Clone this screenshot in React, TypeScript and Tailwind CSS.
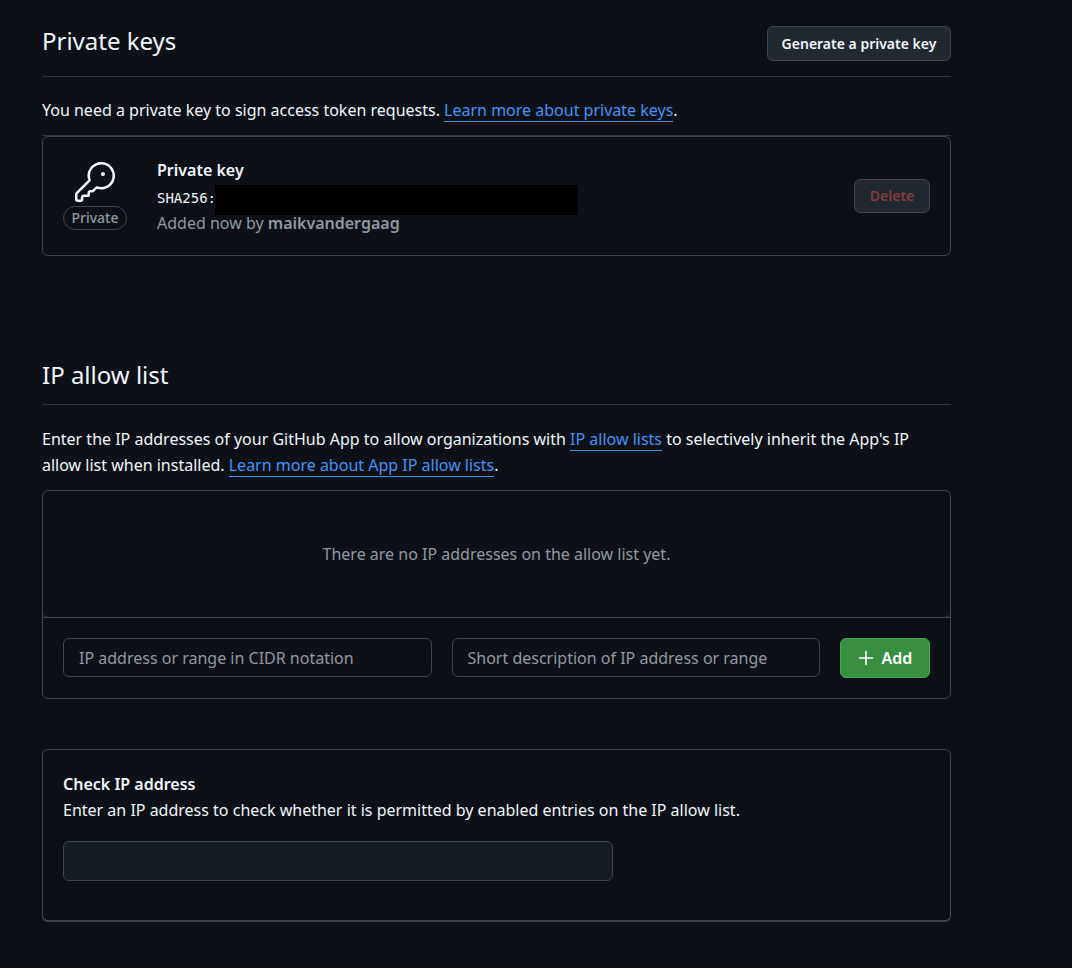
const link = "border-b border-[#4493f8] text-[#4493f8]";
const box = "rounded-md border border-[#3d444d]";

function KeyIcon() {
  return (
    <svg width="40" height="40" viewBox="0 0 24 24" fill="#f0f6fc" aria-hidden="true">
      <path d="M16.75 8.5a1.25 1.25 0 1 0 0-2.5 1.25 1.25 0 0 0 0 2.5Z" />
      <path d="M15.75 0a8.25 8.25 0 1 1-2.541 16.101l-1.636 1.636a1.744 1.744 0 0 1-1.237.513H9.25a.25.25 0 0 0-.25.25v1.448a.876.876 0 0 1-.256.619l-.214.213a.75.75 0 0 1-.545.22H5.25a.25.25 0 0 0-.25.25v1A1.75 1.75 0 0 1 3.25 24h-1.5A1.75 1.75 0 0 1 0 22.25v-2.836c0-.464.185-.908.513-1.236l7.386-7.388A8.249 8.249 0 0 1 15.75 0ZM9 8.25a6.733 6.733 0 0 0 .463 2.462.75.75 0 0 1-.168.804l-7.722 7.721a.25.25 0 0 0-.073.177v2.836c0 .138.112.25.25.25h1.5a.25.25 0 0 0 .25-.25v-1c0-.966.784-1.75 1.75-1.75H7.5v-1c0-.966.784-1.75 1.75-1.75h1.086a.25.25 0 0 0 .177-.073l1.971-1.972a.75.75 0 0 1 .804-.168A6.75 6.75 0 1 0 9 8.25Z" />
    </svg>
  );
}

export default function App() {
  return (
    <div className="min-h-screen bg-[#0d1117] pl-[42px] pr-[121px] pt-6 pb-12 font-['Noto_Sans',sans-serif] text-base leading-[26px] text-[#f0f6fc]">
      <section>
        <header className="flex items-start justify-between border-b border-[#2f353d] pb-[15px]">
          <h2 className="text-2xl leading-[34px]">Private keys</h2>
          <button className={`${box} mt-[2px] h-[35px] w-[184px] bg-[#212830] text-sm font-semibold`}>Generate a private key</button>
        </header>
        <p className="mt-5">
          You need a private key to sign access token requests. <a href="#keys" className={link}>Learn more about private keys</a>.
        </p>
        <div className="mt-3 border-t border-[#2f353d]">
          <div className={`${box} flex h-[120px] items-center px-5`}>
            <div className="flex w-16 flex-col items-center">
              <KeyIcon />
              <span className="mt-1 flex h-6 w-16 items-center justify-center rounded-full border border-[#3d444d] text-sm font-medium text-[#9198a1]">Private</span>
            </div>
            <div className="ml-[30px] flex-1">
              <p className="font-semibold">Private key</p>
              <div className="flex h-[27px] items-start">
                <code className="w-[58px] font-['DejaVu_Sans_Mono',monospace] text-sm leading-[30px]">SHA256:</code>
                <span className="mt-[2px] h-[30px] w-[363px] bg-black" />
              </div>
              <p className="text-[#9198a1]">Added now by <strong className="font-semibold">maikvandergaag</strong></p>
            </div>
            <button className={`${box} h-[34px] w-[76px] bg-[#212830] text-sm font-semibold text-[#843b3c]`}>Delete</button>
          </div>
        </div>
      </section>

      <section className="mt-[102px]">
        <h2 className="border-b border-[#2f353d] pb-3 text-2xl leading-[34px]">IP allow list</h2>
        <p className="mt-[21px]">
          Enter the IP addresses of your GitHub App to allow organizations with <a href="#lists" className={link}>IP allow lists</a> to selectively inherit the App's IP allow list when installed. <a href="#app-lists" className={link}>Learn more about App IP allow lists</a>.
        </p>
        <div className={`${box} mt-3`}>
          <p className="flex h-[127px] items-center justify-center rounded-b-md border-b border-[#3d444d] text-[#9198a1]">There are no IP addresses on the allow list yet.</p>
          <form className="-mt-px flex gap-5 border-t border-[#3d444d] p-5">
            <input aria-label="IP address or range" placeholder="IP address or range in CIDR notation" className={`${box} h-[39px] min-w-0 flex-1 px-[15px] placeholder:text-[#9198a1]`} />
            <input aria-label="Short description" placeholder="Short description of IP address or range" className={`${box} h-[39px] min-w-0 flex-1 px-[15px] placeholder:text-[#9198a1]`} />
            <button type="button" className="flex h-10 w-[90px] items-center justify-center gap-2 rounded-md border border-[#4ea35b] bg-[#388f40] font-semibold text-white">
              <svg width="16" height="16" viewBox="0 0 16 16" stroke="currentColor" strokeWidth="1.6" strokeLinecap="round" aria-hidden="true"><path d="M8 1.5v13M1.5 8h13" /></svg>
              Add
            </button>
          </form>
        </div>
      </section>

      <section className="mt-[50px] rounded-md border border-b-2 border-[#3d444d] px-5 pb-[39px] pt-[21px]">
        <label htmlFor="check" className="block font-semibold">Check IP address</label>
        <p>Enter an IP address to check whether it is permitted by enabled entries on the IP allow list.</p>
        <input id="check" className={`${box} mt-[18px] block h-10 w-[550px] max-w-full bg-[#151b23] px-4`} />
      </section>
    </div>
  );
}
